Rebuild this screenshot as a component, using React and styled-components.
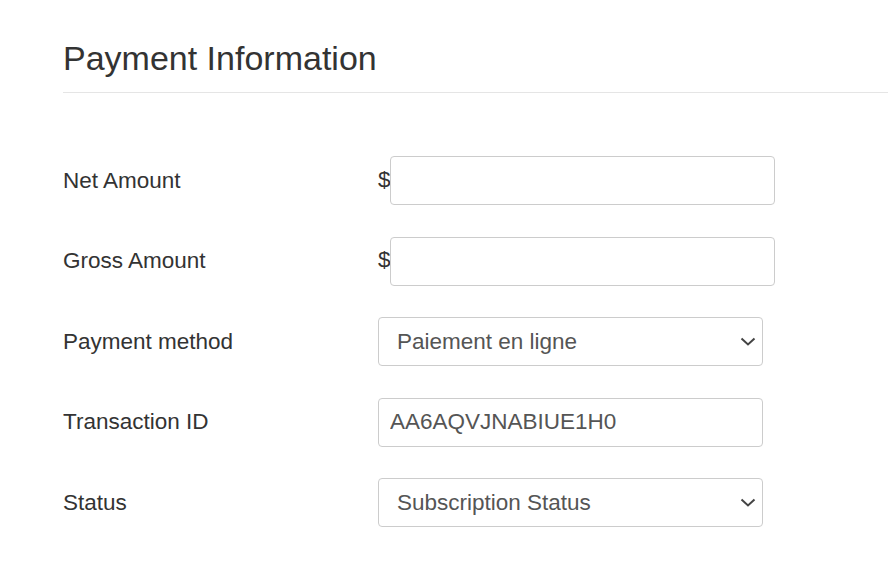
import React, { useState } from "react";
import styled, { createGlobalStyle } from "styled-components";

const GlobalStyle = createGlobalStyle`
  body {
    margin: 0;
    background: #fff;
    font-family: "Liberation Sans", Arial, sans-serif;
    color: #333;
  }
`;

const Page = styled.div`
  padding: 40px 0 0 63px;
  overflow: hidden;
`;

const Title = styled.h2`
  margin: 0;
  padding-bottom: 15px;
  font-size: 34px;
  font-weight: normal;
  line-height: 1.1;
  color: #333;
  border-bottom: 1px solid #e5e5e5;
`;

const Form = styled.div`
  display: grid;
  grid-template-columns: 315px 400px;
  row-gap: 31.5px;
  margin-top: 63px;
  align-items: center;
`;

const Label = styled.label`
  font-size: 22.5px;
  color: #333;
`;

const Field = styled.div`
  display: flex;
  align-items: center;
`;

const Currency = styled.span`
  width: 12px;
  font-size: 22.5px;
  color: #333;
  margin-top: -2px;
`;

const Input = styled.input`
  box-sizing: border-box;
  width: 385px;
  height: 49px;
  padding: 0 11px;
  border: 1px solid #ccc;
  border-radius: 4px;
  font-family: inherit;
  font-size: 22.5px;
  color: #555;
  background: #fff;
  outline: none;
`;

const SelectWrap = styled.div`
  position: relative;
  width: 385px;
`;

const Select = styled.select`
  box-sizing: border-box;
  width: 100%;
  height: 49px;
  padding: 0 40px 0 18px;
  border: 1px solid #ccc;
  border-radius: 4px;
  font-family: inherit;
  font-size: 22.5px;
  color: #555;
  background: #fff;
  appearance: none;
  outline: none;
`;

const Chevron = styled.svg`
  position: absolute;
  right: 7px;
  top: 19px;
  pointer-events: none;
`;

function ChevronIcon() {
  return (
    <Chevron width="16" height="12" viewBox="0 0 16 12">
      <path d="M1.5 2.5 L8 8.5 L14.5 2.5" fill="none" stroke="#444" strokeWidth="2" />
    </Chevron>
  );
}

function AmountField({ id }) {
  return (
    <Field>
      <Currency>$</Currency>
      <Input id={id} type="text" />
    </Field>
  );
}

function SelectField({ id, options }) {
  return (
    <SelectWrap>
      <Select id={id} defaultValue={options[0]}>
        {options.map((o) => (
          <option key={o}>{o}</option>
        ))}
      </Select>
      <ChevronIcon />
    </SelectWrap>
  );
}

export default function App() {
  const [transaction, setTransaction] = useState("AA6AQVJNABIUE1H0");
  return (
    <Page>
      <GlobalStyle />
      <Title>Payment Information</Title>
      <Form>
        <Label htmlFor="net">Net Amount</Label>
        <AmountField id="net" />

        <Label htmlFor="gross">Gross Amount</Label>
        <AmountField id="gross" />

        <Label htmlFor="method">Payment method</Label>
        <SelectField
          id="method"
          options={["Paiement en ligne", "Carte bancaire", "Virement"]}
        />

        <Label htmlFor="transaction">Transaction ID</Label>
        <Field>
          <Input
            id="transaction"
            type="text"
            value={transaction}
            onChange={(e) => setTransaction(e.target.value)}
          />
        </Field>

        <Label htmlFor="status">Status</Label>
        <SelectField
          id="status"
          options={["Subscription Status", "Active", "Cancelled"]}
        />
      </Form>
    </Page>
  );
}
